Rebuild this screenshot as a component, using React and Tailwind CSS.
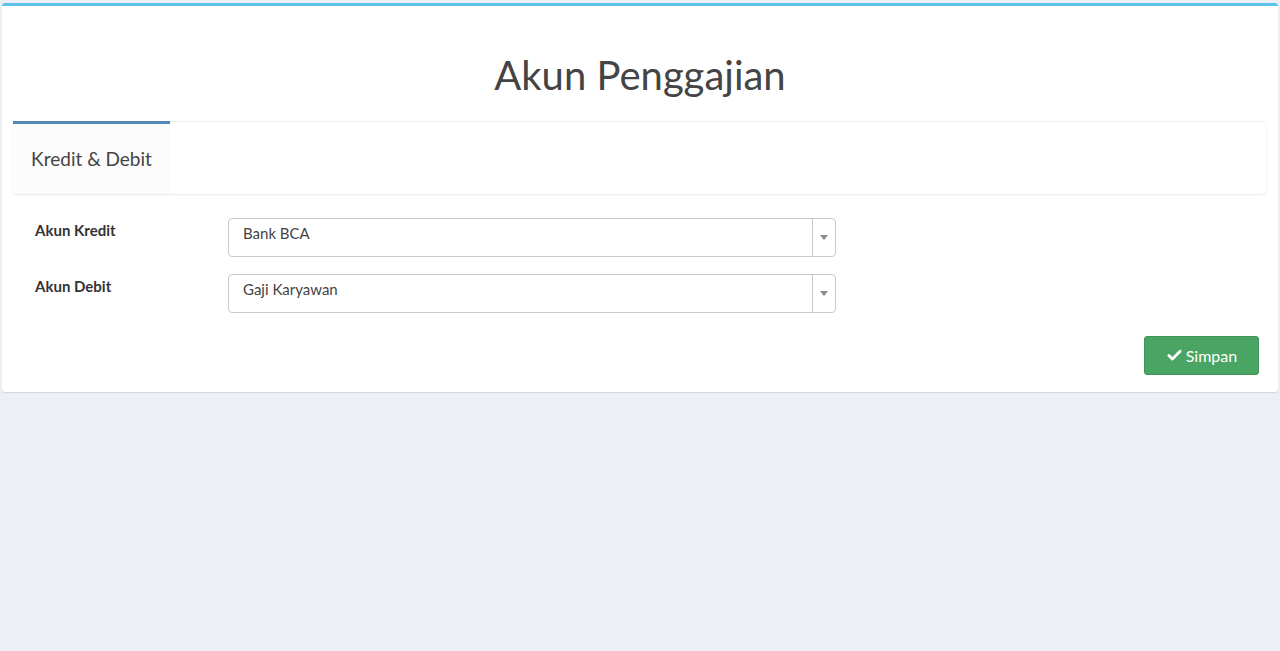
import { Check } from 'lucide-react';

const fields = [
  { label: 'Akun Kredit', value: 'Bank BCA' },
  { label: 'Akun Debit', value: 'Gaji Karyawan' },
];

function SelectBox({ value }) {
  return (
    <div className="w-[608px] h-[39px] flex items-stretch border border-[#c9c9c9] rounded-[4px] bg-white">
      <span className="flex-1 px-[14px] pt-[3px] text-[15px] text-[#444]">{value}</span>
      <span className="w-[23px] border-l border-[#c9c9c9] flex items-center justify-center">
        <span className="w-0 h-0 border-l-[4px] border-r-[4px] border-t-[5px] border-l-transparent border-r-transparent border-t-[#888]" />
      </span>
    </div>
  );
}

export default function App() {
  return (
    <div className="min-h-[651px] bg-[#ecf0f5] pt-[3px] px-[2px] font-['Lato','Open_Sans',sans-serif] text-[#333]">
      <div className="bg-white border-t-[3px] border-[#5cc1ec] rounded-[3px] shadow-[0_1px_1px_rgba(0,0,0,0.12)] w-[1276px] pb-[17px]">
        <h1 className="text-center text-[40px] text-[#444] pt-[47px] pb-[24px] leading-[1.1]">Akun Penggajian</h1>

        <div className="mx-[11px] shadow-[0_1px_2px_rgba(0,0,0,0.1)] rounded-[3px] border-t border-[#f0f0f0] mr-[12px]">
          <div className="flex">
            <div className="w-[157px] h-[73px] border-t-[3px] border-[#5589b8] bg-[#fcfcfc] flex items-center justify-center -mt-px">
              <span className="text-[19px] text-[#444]">Kredit &amp; Debit</span>
            </div>
            <div className="flex-1" />
          </div>
        </div>

        <div className="pt-[24px] px-[33px] flex flex-col gap-[17px]">
          {fields.map((f) => (
            <div key={f.label} className="flex items-start">
              <label className="w-[193px] pt-[1px] text-[15px] font-bold text-[#333]">{f.label}</label>
              <SelectBox value={f.value} />
            </div>
          ))}
        </div>

        <div className="flex justify-end pr-[19px] pt-[23px]">
          <button className="w-[115px] h-[39px] bg-[#4aa463] border border-[#3f9457] rounded-[3px] text-white text-[16px] flex items-center justify-center gap-[3px]">
            <Check size={17} strokeWidth={4} />
            Simpan
          </button>
        </div>
      </div>
    </div>
  );
}
